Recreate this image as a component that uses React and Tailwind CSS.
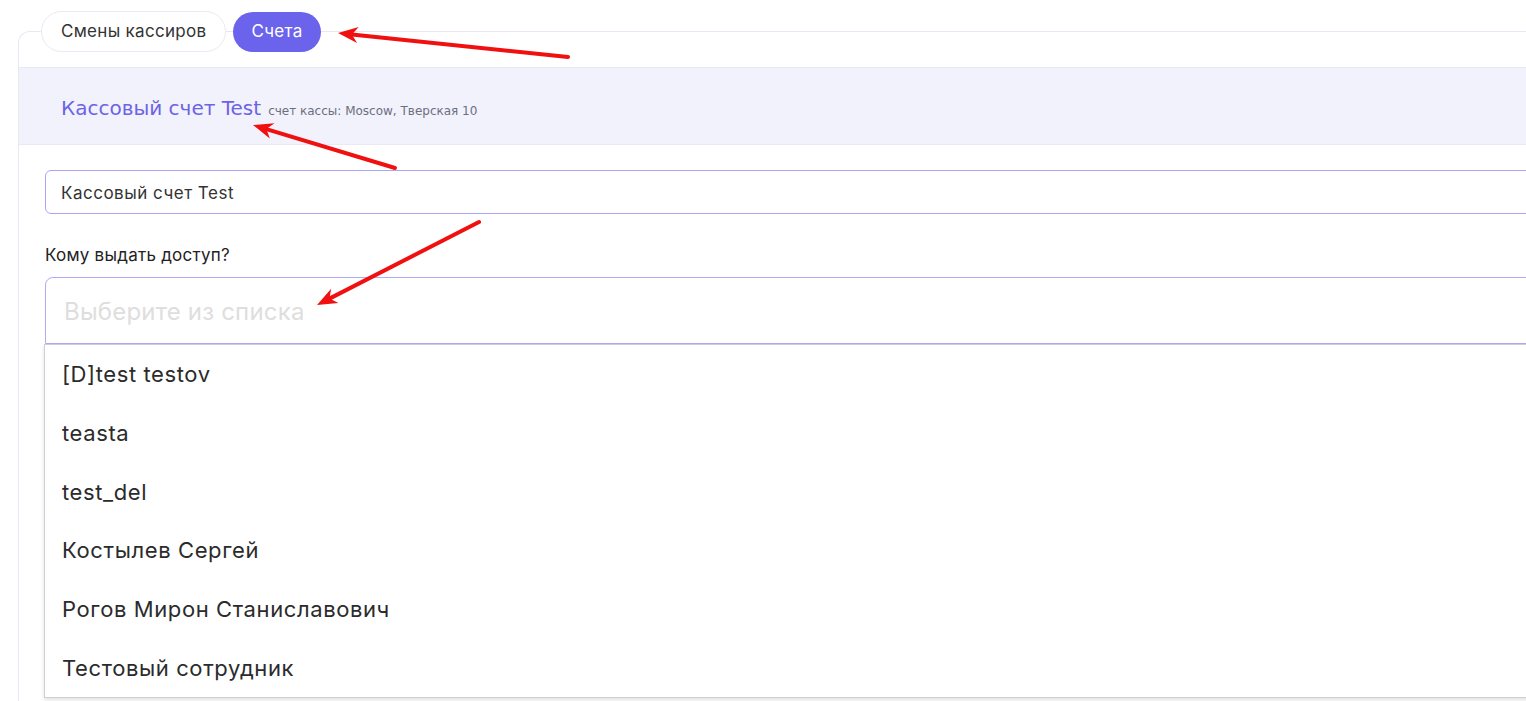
import React from 'react';

const users = [
  '[D]test testov',
  'teasta',
  'test_del',
  'Костылев Сергей',
  'Рогов Мирон Станиславович',
  'Тестовый сотрудник',
];

// annotation arrows: tail -> tip
const arrows = [
  { from: [568, 57], to: [338, 33] },
  { from: [395, 168], to: [253, 125] },
  { from: [479, 222], to: [317, 305] },
];

function Arrow({ from, to }) {
  const dx = to[0] - from[0];
  const dy = to[1] - from[1];
  const len = Math.hypot(dx, dy);
  const ux = dx / len, uy = dy / len;
  const nx = -uy, ny = ux;
  const L = 20, W = 8, notch = 14;
  const bx = to[0] - ux * L, by = to[1] - uy * L;
  const kx = to[0] - ux * notch, ky = to[1] - uy * notch;
  const pts = [
    [to[0], to[1]],
    [bx + nx * W, by + ny * W],
    [kx, ky],
    [bx - nx * W, by - ny * W],
  ].map(p => p.join(',')).join(' ');
  return (
    <g>
      <line x1={from[0]} y1={from[1]} x2={kx} y2={ky} stroke="#f01010" strokeWidth="4" strokeLinecap="round" />
      <polygon points={pts} fill="#f01010" />
    </g>
  );
}

function Tabs() {
  return (
    <div className="flex items-center gap-[7px] pl-[22px] -mt-[21px]">
      <button className="h-[41px] px-[19px] rounded-full border border-[#e9eaf4] bg-white text-[17px] tracking-[0.3px] text-[#333] font-['Inter',sans-serif]">
        Смены кассиров
      </button>
      <button className="h-[40px] px-[18px] rounded-full bg-[#6b63eb] text-[17px] tracking-[0.3px] text-white font-['Inter',sans-serif]">
        Счета
      </button>
    </div>
  );
}

function UserDropdown() {
  return (
    <div className="relative">
      <div className="h-[67px] rounded-t-[8px] border border-[#b1abf3] flex items-center pl-[18px] pt-[2px]">
        <span className="text-[24px] tracking-[0.2px] text-[#dedede]">Выберите из списка</span>
      </div>
      <div className="absolute left-[-1px] right-0 top-[67px] z-10 bg-white border border-[#cfcfcf] shadow-[0_2px_4px_rgba(0,0,0,0.12)]">
        {users.map(u => (
          <div key={u} className="h-[58.7px] flex items-center pl-[17px] pt-[1px] text-[22px] tracking-[0.6px] text-[#2b2b2b]">
            {u}
          </div>
        ))}
      </div>
    </div>
  );
}

export default function App() {
  return (
    <div className="relative w-full h-[701px] overflow-hidden bg-white font-['Inter',sans-serif]">
      <div className="w-[1600px] pl-[18px] pt-[31px]">
        <div className="border-l border-t border-[#e8e8f3] rounded-tl-[12px] h-[700px]">
          <Tabs />
          <div className="mt-[15px] h-[78px] bg-[#f2f2fc] border-y border-[#e9e9f5] flex items-center pl-[42px] pt-[3px]">
            <span className="text-[20px] text-[#6c63e6] font-['DejaVu_Sans',sans-serif]">Кассовый счет Test</span>
            <span className="ml-[7px] mt-[6px] text-[12px] text-[#6b6f80] font-['DejaVu_Sans',sans-serif]">счет кассы: Moscow, Тверская 10</span>
          </div>
          <div className="pl-[26px] pt-[25px]">
            <div className="h-[44px] rounded-[6px] border border-[#aba5f2] flex items-center pl-[15px] pt-[3px] text-[17px] tracking-[0.5px] text-[#333]">
              Кассовый счет Test
            </div>
            <div className="mt-[31px] text-[17px] tracking-[0.25px] text-[#222] leading-[20px]">Кому выдать доступ?</div>
            <div className="mt-[12px]">
              <UserDropdown />
            </div>
          </div>
        </div>
      </div>
      <svg className="absolute inset-0 z-20 pointer-events-none" width="1526" height="701">
        {arrows.map((a, i) => <Arrow key={i} {...a} />)}
      </svg>
    </div>
  );
}
